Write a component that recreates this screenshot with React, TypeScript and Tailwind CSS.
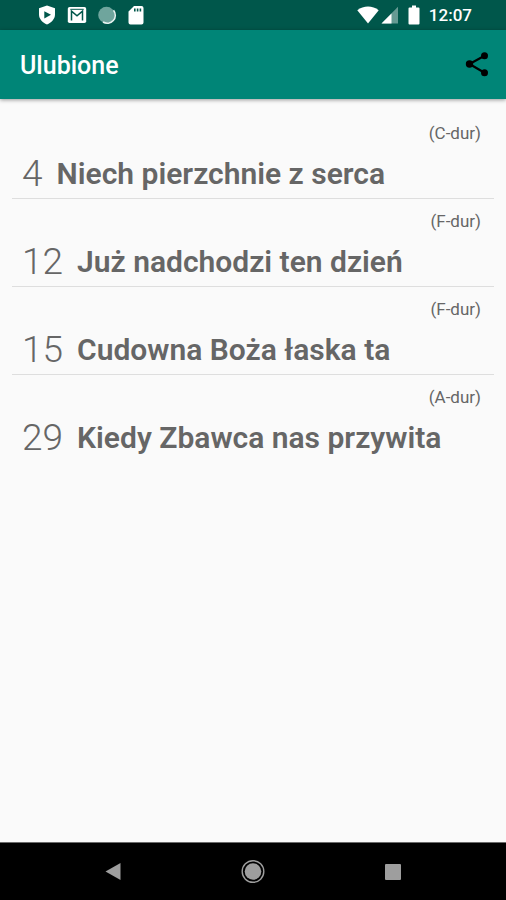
type Song = {
  number: number;
  title: string;
  songKey: string;
};

const FAVOURITES: Song[] = [
  { number: 4, title: "Niech pierzchnie z serca", songKey: "C-dur" },
  { number: 12, title: "Już nadchodzi ten dzień", songKey: "F-dur" },
  { number: 15, title: "Cudowna Boża łaska ta", songKey: "F-dur" },
  { number: 29, title: "Kiedy Zbawca nas przywita", songKey: "A-dur" },
];

function StatusBar() {
  return (
    <div className="flex h-[30px] items-center justify-between bg-[#00574b] pl-[37px] pr-[34px] text-white">
      {/* Notifications */}
      <div className="flex items-center gap-[10px]">
        <svg viewBox="0 0 20 20" className="size-5" fill="currentColor">
          <path fillRule="evenodd" d="M10 .5 18 3.200V9.500C18 14 14.500 17.500 10 19.500 5.500 17.500 2 14 2 9.500V3.200ZM7.300 6.200V13.400L14 9.800Z" />
        </svg>
        <svg viewBox="0 0 20 20" className="size-5" fill="none">
          <rect x=".8" y="2" width="18.400" height="16" rx="1.800" fill="currentColor" />
          <path d="M4.500 15.500V6.200l5.500 4.600 5.500-4.600v9.300" stroke="#00574b" strokeWidth="1.500" />
          <path d="M3.300 4.300h13.400" stroke="#00574b" strokeWidth="1" />
        </svg>
        <svg viewBox="0 0 20 20" className="size-5">
          <circle cx="9.500" cy="10" r="8.300" fill="#6fa59d" />
          <path d="M16.500 5.200A8 8 0 0 1 6 17" fill="none" stroke="#e8f3f1" strokeWidth="1.600" />
        </svg>
        <svg viewBox="0 0 20 20" className="size-5" fill="currentColor">
          <path fillRule="evenodd" d="M7 1h7.500Q16.500 1 16.500 3v14.500q0 2-2 2h-11q-2 0-2-2V6.500ZM7 3.500v3h1.600v-3ZM9.800 3.500v3h1.600v-3ZM12.600 3.500v3h1.600v-3Z" />
        </svg>
      </div>

      {/* System */}
      <div className="flex items-center">
        <svg viewBox="0 0 22 18" className="h-[18px] w-[22px]" fill="currentColor">
          <path d="M11 17.500.300 4.200C6.500-.6 15.500-.6 21.700 4.200Z" />
        </svg>
        <svg viewBox="0 0 18 18" className="ml-[2px] size-[18px]" fill="currentColor">
          <path d="M.5 17.500 17 .8V17.500Z" opacity=".4" />
          <path d="M.5 17.500 10.500 7.400V17.500Z" />
        </svg>
        <svg viewBox="0 0 12 20" className="ml-[9px] h-5 w-3" fill="currentColor">
          <path d="M4 .5h4v2h2.500q1 0 1 1v15q0 1-1 1h-9q-1 0-1-1v-15q0-1 1-1H4Z" />
        </svg>
        <span className="ml-[9px] text-[17px] leading-5 font-medium">12:07</span>
      </div>
    </div>
  );
}

function AppBar() {
  return (
    <header className="flex h-[69px] items-center justify-between bg-[#008577] pl-5 pr-4 shadow-[0_1px_4px_rgba(0,0,0,0.4)]">
      <h1 className="pt-[2px] text-[25px] leading-8 font-medium text-white">Ulubione</h1>
      <button type="button" aria-label="Udostępnij" className="text-black">
        <svg viewBox="0 0 26 26" className="size-[26px]" fill="currentColor">
          <path d="M20.500 3.700 5.500 12 20.500 20.700" fill="none" stroke="currentColor" strokeWidth="2.200" />
          <circle cx="20.500" cy="3.700" r="3.500" />
          <circle cx="5.500" cy="12" r="3.700" />
          <circle cx="20.500" cy="20.700" r="3.500" />
        </svg>
      </button>
    </header>
  );
}

function SongRow({ song }: { song: Song }) {
  return (
    <li className="border-b border-[#dedede] last:border-b-0">
      <a href="#" className="block pt-[10px] pr-[13px] pb-1 pl-[10px]">
        <p className="text-right text-[17px] leading-6">({song.songKey})</p>
        <div className="mt-[9px] flex items-center gap-[14px]">
          <span className="text-[37px] leading-10 font-light">{song.number}</span>
          <span className="text-[30px] leading-10 font-semibold">{song.title}</span>
        </div>
      </a>
    </li>
  );
}

function NavBar() {
  return (
    <nav className="grid h-[58px] grid-cols-3 border-t border-[#6b6b6b] bg-black px-[43px] text-[#9e9e9e]">
      <button type="button" aria-label="Wstecz" className="flex items-center justify-center">
        <svg viewBox="0 0 18 18" className="size-[18px]" fill="currentColor">
          <path d="M1.500 8.500 16.500 0v17Z" />
        </svg>
      </button>
      <button type="button" aria-label="Ekran główny" className="flex items-center justify-center">
        <svg viewBox="0 0 24 24" className="size-6">
          <circle cx="12" cy="11.500" r="10.800" fill="none" stroke="currentColor" strokeWidth="1.400" />
          <circle cx="12" cy="11.500" r="8.300" fill="currentColor" />
        </svg>
      </button>
      <button type="button" aria-label="Ostatnie aplikacje" className="flex items-center justify-center">
        <svg viewBox="0 0 16 16" className="size-4" fill="currentColor">
          <rect width="16" height="16" rx="1" />
        </svg>
      </button>
    </nav>
  );
}

export default function App() {
  return (
    <div className="flex min-h-screen flex-col bg-[#fafafa] font-[Roboto,sans-serif] text-[#666666]">
      <StatusBar />
      <AppBar />
      <main className="flex-1 px-3 pt-3">
        <ul>
          {FAVOURITES.map((song) => (
            <SongRow key={song.number} song={song} />
          ))}
        </ul>
      </main>
      <NavBar />
    </div>
  );
}
